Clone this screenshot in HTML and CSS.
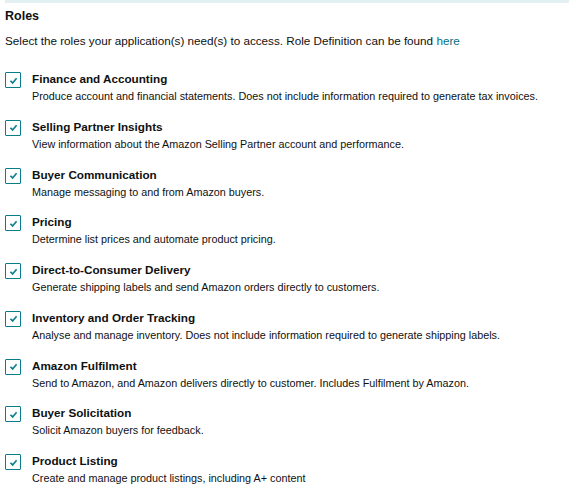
FILE: index.html
```html
<!DOCTYPE html>
<html>
<head>
<meta charset="utf-8">
<link rel="stylesheet" href="styles.css">
</head>
<body>
<div class="band"></div>
<section class="roles">
  <h2 class="title">Roles</h2>
  <p class="intro">Select the roles your application(s) need(s) to access. Role Definition can be found <a class="link" href="#">here</a></p>
  <ul class="list">
    <li class="item"><span class="box"><svg viewBox="0 0 16 16" width="16" height="16"><path d="M4.2 8.3 L6.9 11 L11.8 5.2" fill="none" stroke="#0a7d8c" stroke-width="2"/></svg></span><div class="text"><div class="name">Finance and Accounting</div><div class="desc">Produce account and financial statements. Does not include information required to generate tax invoices.</div></div></li>
    <li class="item"><span class="box"><svg viewBox="0 0 16 16" width="16" height="16"><path d="M4.2 8.3 L6.9 11 L11.8 5.2" fill="none" stroke="#0a7d8c" stroke-width="2"/></svg></span><div class="text"><div class="name">Selling Partner Insights</div><div class="desc">View information about the Amazon Selling Partner account and performance.</div></div></li>
    <li class="item"><span class="box"><svg viewBox="0 0 16 16" width="16" height="16"><path d="M4.2 8.3 L6.9 11 L11.8 5.2" fill="none" stroke="#0a7d8c" stroke-width="2"/></svg></span><div class="text"><div class="name">Buyer Communication</div><div class="desc">Manage messaging to and from Amazon buyers.</div></div></li>
    <li class="item"><span class="box"><svg viewBox="0 0 16 16" width="16" height="16"><path d="M4.2 8.3 L6.9 11 L11.8 5.2" fill="none" stroke="#0a7d8c" stroke-width="2"/></svg></span><div class="text"><div class="name">Pricing</div><div class="desc">Determine list prices and automate product pricing.</div></div></li>
    <li class="item"><span class="box"><svg viewBox="0 0 16 16" width="16" height="16"><path d="M4.2 8.3 L6.9 11 L11.8 5.2" fill="none" stroke="#0a7d8c" stroke-width="2"/></svg></span><div class="text"><div class="name">Direct-to-Consumer Delivery</div><div class="desc">Generate shipping labels and send Amazon orders directly to customers.</div></div></li>
    <li class="item"><span class="box"><svg viewBox="0 0 16 16" width="16" height="16"><path d="M4.2 8.3 L6.9 11 L11.8 5.2" fill="none" stroke="#0a7d8c" stroke-width="2"/></svg></span><div class="text"><div class="name">Inventory and Order Tracking</div><div class="desc">Analyse and manage inventory. Does not include information required to generate shipping labels.</div></div></li>
    <li class="item"><span class="box"><svg viewBox="0 0 16 16" width="16" height="16"><path d="M4.2 8.3 L6.9 11 L11.8 5.2" fill="none" stroke="#0a7d8c" stroke-width="2"/></svg></span><div class="text"><div class="name">Amazon Fulfilment</div><div class="desc">Send to Amazon, and Amazon delivers directly to customer. Includes Fulfilment by Amazon.</div></div></li>
    <li class="item"><span class="box"><svg viewBox="0 0 16 16" width="16" height="16"><path d="M4.2 8.3 L6.9 11 L11.8 5.2" fill="none" stroke="#0a7d8c" stroke-width="2"/></svg></span><div class="text"><div class="name">Buyer Solicitation</div><div class="desc">Solicit Amazon buyers for feedback.</div></div></li>
    <li class="item"><span class="box"><svg viewBox="0 0 16 16" width="16" height="16"><path d="M4.2 8.3 L6.9 11 L11.8 5.2" fill="none" stroke="#0a7d8c" stroke-width="2"/></svg></span><div class="text"><div class="name">Product Listing</div><div class="desc">Create and manage product listings, including A+ content</div></div></li>
  </ul>
</section>
</body>
</html>
```
FILE: styles.css
```css
html, body { margin: 0; padding: 0; background: #fff; }
body { font-family: "Liberation Sans", Arial, sans-serif; color: #0f1111; }
.band { height: 3px; margin-left: 5px; background: #e3f0f2; }
.roles { padding: 0 5px; }
.title { margin: 5px 0 0; font-size: 12.5px; font-weight: 700; line-height: 16px; }
.intro { margin: 9px 0 0; font-size: 11.7px; line-height: 16px; }
.link { color: #007185; text-decoration: none; }
.list { list-style: none; margin: 22px 0 0; padding: 0; }
.item { display: flex; align-items: flex-start; height: 47.75px; }
.box { width: 16px; height: 16px; box-sizing: border-box; border: 1.5px solid #0a7d8c; border-radius: 1px; margin-top: 1px; display: flex; align-items: center; justify-content: center; }
.box svg { width: 13px; height: 13px; }
.text { margin-left: 11px; }
.name { font-size: 11.7px; font-weight: 700; line-height: 16px; }
.desc { font-size: 10.8px; line-height: 15px; margin-top: 2px; }
```
